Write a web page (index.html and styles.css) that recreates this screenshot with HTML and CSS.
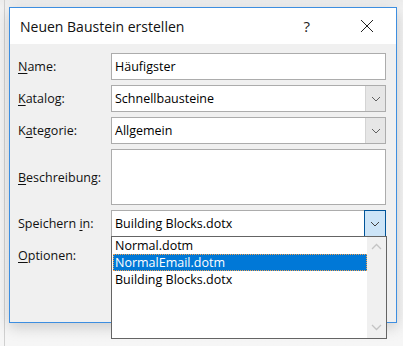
FILE: index.html
```html
<!DOCTYPE html>
<html>
<head>
<meta charset="utf-8">
<link rel="stylesheet" href="styles.css">
</head>
<body>
<div class="backdrop">
  <div class="dialog">
    <div class="titlebar">
      <span class="title">Neuen Baustein erstellen</span>
      <span class="help">?</span>
      <svg class="close" width="14" height="14" viewBox="0 0 14 14"><path d="M1 1L13 13M13 1L1 13" stroke="#222" stroke-width="1" fill="none"/></svg>
    </div>
    <div class="body">
      <div class="form">
        <label class="lbl"><span><u>N</u>ame:</span></label>
        <div class="field"><span class="val">Häufigster</span></div>

        <label class="lbl"><span><u>K</u>atalog:</span></label>
        <div class="field combo"><span class="val">Schnellbausteine</span>
          <span class="btn"><svg width="10" height="6" viewBox="0 0 10 6"><path d="M1 1L5 5L9 1" stroke="#606060" fill="none"/></svg></span>
        </div>

        <label class="lbl"><span>K<u>a</u>tegorie:</span></label>
        <div class="field combo"><span class="val">Allgemein</span>
          <span class="btn"><svg width="10" height="6" viewBox="0 0 10 6"><path d="M1 1L5 5L9 1" stroke="#606060" fill="none"/></svg></span>
        </div>

        <label class="lbl"><span><u>B</u>eschreibung:</span></label>
        <div class="field area"></div>

        <label class="lbl"><span>Speichern <u>i</u>n:</span></label>
        <div class="field combo open"><span class="val">Building Blocks.dotx</span>
          <span class="btn active"><svg width="10" height="6" viewBox="0 0 10 6"><path d="M1 1L5 5L9 1" stroke="#404040" fill="none"/></svg></span>
          <div class="popup">
            <div class="items">
              <div class="item">Normal.dotm</div>
              <div class="item sel">NormalEmail.dotm</div>
              <div class="item">Building Blocks.dotx</div>
            </div>
            <div class="scroll">
              <svg width="11" height="7" viewBox="0 0 11 7"><path d="M1 6L5.5 1.5L10 6" stroke="#c4c4c4" stroke-width="1.3" fill="none"/></svg>
              <svg width="11" height="7" viewBox="0 0 11 7"><path d="M1 1L5.5 5.5L10 1" stroke="#c4c4c4" stroke-width="1.3" fill="none"/></svg>
            </div>
          </div>
        </div>

        <label class="lbl"><span><u>O</u>ptionen:</span></label>
        <div></div>
      </div>
    </div>
  </div>
</div>
</body>
</html>
```
FILE: styles.css
```css
* { box-sizing: border-box; }
html, body { margin: 0; padding: 0; }
body {
  width: 403px;
  height: 346px;
  overflow: hidden;
  background: #fafafa;
  font-family: "Open Sans", "Noto Sans", sans-serif;
  color: #000;
}
.backdrop {
  height: 346px;
  padding: 7px 7px 0 8px;
  background: linear-gradient(#ececec 0, #f3f3f3 8px, #f6f6f6 100%);
  border-left: 1px solid transparent;
  position: relative;
}
.backdrop::before {
  content: "";
  position: absolute;
  left: 3px; top: 0; bottom: 0;
  width: 1px;
  background: #d0d0d0;
}
.dialog {
  width: 388px;
  height: 316px;
  border: 1px solid #3d8ee0;
  background: #f0f0f0;
  box-shadow: 0 4px 14px rgba(0,0,0,0.18);
  position: relative;
}
.titlebar {
  height: 36px;
  background: #fff;
  display: flex;
  align-items: center;
  padding-left: 10px;
}
.title {
  font-size: 14px;
  color: #111;
  flex: 1;
}
.help {
  font-size: 15px;
  color: #222;
  margin-right: 50px;
}
.close { margin-right: 22px; }
.body {
  padding: 9px 8px 0 8px;
}
.form {
  display: grid;
  grid-template-columns: 93px 275px;
  grid-template-rows: 27px 27px 27px 56px 27px 27px;
  row-gap: 5px;
}
.lbl {
  font-size: 12.5px;
  display: flex;
  align-items: center;
  color: #111;
  white-space: pre;
}
.lbl u { text-decoration-thickness: 1px; text-underline-offset: 2px; }
.field {
  border: 1px solid #acacac;
  background: #fff;
  display: flex;
  align-items: center;
  position: relative;
}
.val {
  font-size: 12.5px;
  padding-left: 3px;
  flex: 1;
  white-space: nowrap;
}
.btn {
  width: 20px;
  height: 25px;
  background: #e6e6e6;
  border-left: 1px solid #d4d4d4;
  display: flex;
  align-items: center;
  justify-content: center;
}
.btn.active {
  background: #cce4f7;
  border: 1px solid #005499;
  height: 27px;
  width: 22px;
  margin: -1px -1px -1px 0;
}
.popup {
  position: absolute;
  left: -1px;
  top: 25px;
  width: 276px;
  height: 103px;
  border: 1px solid #646464;
  background: #fff;
  display: flex;
  z-index: 2;
}
.items {
  flex: 1;
}
.item {
  font-size: 12.5px;
  height: 17px;
  line-height: 17px;
  padding-left: 2px;
  margin-left: 1px;
}
.item.sel {
  background: #0078d7;
  color: #fff;
  outline: 1px dotted #f0a050;
  outline-offset: -1px;
}
.scroll {
  width: 19px;
  background: #f0f0f0;
  display: flex;
  flex-direction: column;
  justify-content: space-between;
  align-items: center;
  padding: 6px 0 7px;
}
```
